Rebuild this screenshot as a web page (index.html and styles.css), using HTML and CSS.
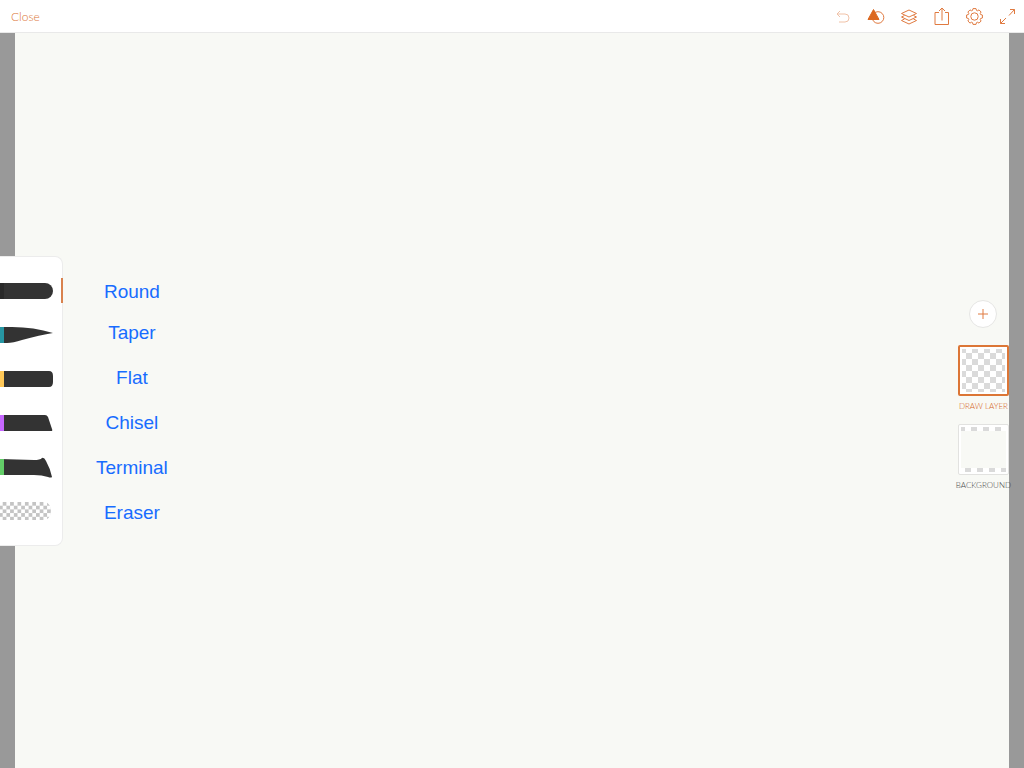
FILE: index.html
```html
<!DOCTYPE html>
<html lang="en">
<head>
    <meta charset="UTF-8">
    <meta name="viewport" content="width=device-width, initial-scale=1.0">
    <title>Drawing</title>
    <link rel="stylesheet" href="styles.css">
</head>
<body>
    <header class="topbar">
        <button class="close" type="button">Close</button>
        <div class="actions">
            <button type="button" aria-label="Undo" disabled>
                <svg viewBox="0 0 24 24"><path d="M9 7 L6 10 L9 13 M6 10 H14 A4 4 0 0 1 14 18 H8"/></svg>
            </button>
            <button type="button" aria-label="Shapes">
                <svg viewBox="0 0 24 24"><circle cx="14" cy="13.5" r="5.8"/><path class="solid" d="M9.5 5.5 L15 15.5 H4 Z"/></svg>
            </button>
            <button type="button" aria-label="Layers">
                <svg viewBox="0 0 24 24"><path d="M12 6 L19.5 9.5 L12 13 L4.5 9.5 Z"/><path d="M7.5 11.5 L4.5 13 L12 16.5 L19.5 13 L16.5 11.5"/><path d="M7.5 15 L4.5 16.5 L12 20 L19.5 16.5 L16.5 15"/></svg>
            </button>
            <button type="button" aria-label="Share">
                <svg viewBox="0 0 24 24"><path d="M9 8.5 H5 V20.5 H18.5 V8.5 H15 M12 16.5 V4 M9 7 L12 4 L15 7"/></svg>
            </button>
            <button type="button" aria-label="Settings">
                <svg viewBox="0 0 24 24">
                    <g transform="translate(11.5 12.5)">
                        <circle r="3.7"/>
                        <path d="M6.1 -2 L7.9 -1.5 V1.5 L6.1 2 L5.7 2.9 L6.6 4.5 L4.5 6.6 L2.9 5.7 L2 6.1 L1.5 7.9 H-1.5 L-2 6.1 L-2.9 5.7 L-4.5 6.6 L-6.6 4.5 L-5.7 2.9 L-6.1 2 L-7.9 1.5 V-1.5 L-6.1 -2 L-5.7 -2.9 L-6.6 -4.5 L-4.5 -6.6 L-2.9 -5.7 L-2 -6.1 L-1.5 -7.9 H1.5 L2 -6.1 L2.9 -5.7 L4.5 -6.6 L6.6 -4.5 L5.7 -2.9 Z"/>
                    </g>
                </svg>
            </button>
            <button type="button" aria-label="Full screen">
                <svg viewBox="0 0 24 24"><path d="M13 11.5 L18.5 5.5 M14 5.5 H18.5 V10 M10 14 L4.5 19.5 M4.5 15 V19.5 H9"/></svg>
            </button>
        </div>
    </header>

    <main class="workspace">
        <div class="canvas"></div>

        <div class="tools">
            <div class="brushes">
                <button class="brush selected" type="button" aria-labelledby="round">
                    <svg viewBox="0 0 54 24"><path d="M0 4 H45 A8 8 0 0 1 45 20 H0 Z"/><path class="band-dark" d="M0 4 H4 V20 H0 Z"/></svg>
                </button>
                <button class="brush" type="button" aria-labelledby="taper">
                    <svg viewBox="0 0 54 24"><path d="M0 4 H12 Q34 4 53 10 Q40 12 22 17 Q13 20 7 20 H0 Z"/><path class="band-teal" d="M0 4 H4 V20 H0 Z"/></svg>
                </button>
                <button class="brush" type="button" aria-labelledby="flat">
                    <svg viewBox="0 0 54 24"><path d="M0 4 H49 Q53 4 53 9 V15 Q53 20 49 20 H0 Z"/><path class="band-yellow" d="M0 4 H4 V20 H0 Z"/></svg>
                </button>
                <button class="brush" type="button" aria-labelledby="chisel">
                    <svg viewBox="0 0 54 24"><path d="M0 4 H45 Q47 4 48 6 L52 18 Q53 20 51 20 H0 Z"/><path class="band-purple" d="M0 4 H4 V20 H0 Z"/></svg>
                </button>
                <button class="brush" type="button" aria-labelledby="terminal">
                    <svg viewBox="0 0 54 24"><path d="M0 4 L34 5 Q40 5 42 3 Q44 2 46 6 Q50 13 52 22 Q51 23 48 22 Q42 20 34 20 H0 Z"/><path class="band-green" d="M0 4 H4 V20 H0 Z"/></svg>
                </button>
                <button class="brush" type="button" aria-labelledby="eraser">
                    <svg viewBox="0 0 54 24">
                        <defs>
                            <pattern id="checks" x="-1" y="3" width="7.4" height="7.4" patternUnits="userSpaceOnUse">
                                <path class="check" d="M0 3.7 H3.7 V7.4 H0 Z M3.7 0 H7.4 V3.7 H3.7 Z"/>
                            </pattern>
                        </defs>
                        <path fill="url(#checks)" d="M0 3 H46 Q51 6 51 12 Q51 18 46 21 H0 Z"/>
                    </svg>
                </button>
            </div>
            <ul class="names">
                <li id="round">Round</li>
                <li id="taper">Taper</li>
                <li id="flat">Flat</li>
                <li id="chisel">Chisel</li>
                <li id="terminal">Terminal</li>
                <li id="eraser">Eraser</li>
            </ul>
        </div>

        <div class="layers">
            <button class="add" type="button" aria-label="Add layer">
                <svg viewBox="0 0 12 12"><path d="M6 1 V11 M1 6 H11"/></svg>
            </button>
            <button class="layer active" type="button">
                <span class="thumb"><span class="checker"></span></span>
                <span class="caption">DRAW LAYER</span>
            </button>
            <button class="layer" type="button">
                <span class="thumb"><span class="checker"><span class="paper"></span></span></span>
                <span class="caption">BACKGROUND</span>
            </button>
        </div>
    </main>
</body>
</html>
```

FILE: styles.css
```css
* {
    box-sizing: border-box;
}

body {
    margin: 0;
    min-height: 100vh;
    display: flex;
    flex-direction: column;
    background-color: #999999;
    font-family: Lato, "Open Sans", sans-serif;
    font-weight: 300;
}

button {
    padding: 0;
    border: none;
    background: none;
    color: inherit;
    font: inherit;
    cursor: pointer;
}

svg {
    display: block;
}

/* top bar */
.topbar {
    display: flex;
    justify-content: space-between;
    align-items: center;
    height: 33px;
    background-color: #ffffff;
    border-bottom: 1px solid #e9e9e9;
    color: #dc7636;
}

.close {
    padding: 1px 11px 0;
    font-size: 12px;
}

.actions {
    display: flex;
}

.actions button {
    display: flex;
    justify-content: center;
    width: 33px;
}

.actions svg {
    width: 24px;
    height: 24px;
    fill: none;
    stroke: #e07a40;
}

.actions .solid {
    fill: #dc6820;
    stroke: #dc6820;
}

.actions button:disabled {
    opacity: 0.45;
}

/* workspace */
.workspace {
    position: relative;
    flex: 1;
    display: flex;
    justify-content: space-between;
    align-items: center;
}

.canvas {
    position: absolute;
    inset: 0 15px;
    background-color: #f8f9f5;
}

.tools {
    position: relative;
    display: flex;
    align-items: center;
}

.brushes {
    width: 63px;
    padding: 12px 0;
    background-color: #ffffff;
    border: 1px solid #ececec;
    border-left: none;
    border-radius: 0 8px 8px 0;
}

.brush {
    display: flex;
    align-items: center;
    width: 63px;
    height: 44px;
}

.brush svg {
    width: 54px;
    height: 24px;
    fill: #333333;
}

.brush.selected::after {
    content: "";
    width: 2px;
    height: 25px;
    margin-left: 7px;
    background-color: #d9824e;
}

.band-dark { fill: #292929; }
.band-teal { fill: #2796a3; }
.band-yellow { fill: #ffc858; }
.band-purple { fill: #c667ff; }
.band-green { fill: #63cd68; }
.check { fill: #c4c4c4; }

.names {
    margin: 0;
    padding: 6px 0 0 33px;
    list-style: none;
    text-align: center;
    color: #176cff;
    font-family: "Liberation Sans", Arial, sans-serif;
    font-size: 19px;
    font-weight: 400;
}

.names li {
    line-height: 45px;
}

.names li:first-child {
    line-height: 37px;
}

/* layers */
.layers {
    position: relative;
    display: flex;
    flex-direction: column;
    align-items: center;
    padding: 0 13px 11px 0;
}

.add {
    display: flex;
    justify-content: center;
    align-items: center;
    width: 28px;
    height: 28px;
    margin-bottom: 17px;
    border: 1px solid #e6e6e4;
    border-radius: 50%;
    background-color: #ffffff;
}

.add svg {
    width: 12px;
    height: 12px;
    stroke: #e07a40;
}

.layer {
    display: flex;
    flex-direction: column;
    align-items: center;
    color: #444444;
}

.layer.active {
    margin-bottom: 12px;
    color: #d4621c;
}

.thumb {
    width: 51px;
    height: 51px;
    padding: 2px;
    border: 1px solid #e2e2e0;
    border-radius: 2px;
    background-color: #ffffff;
}

.active .thumb {
    border: 2px solid #dc7636;
}

.checker {
    display: block;
    height: 100%;
    background: repeating-conic-gradient(#dadada 0 25%, #ffffff 0 50%) -2px 4px / 12px 12px;
}

.paper {
    display: block;
    height: 100%;
    border: 4px solid transparent;
    border-width: 4px 0;
    background: #f8f9f5 padding-box;
}

.caption {
    margin-top: 4px;
    font-size: 8px;
    line-height: 12px;
    white-space: nowrap;
}
```
